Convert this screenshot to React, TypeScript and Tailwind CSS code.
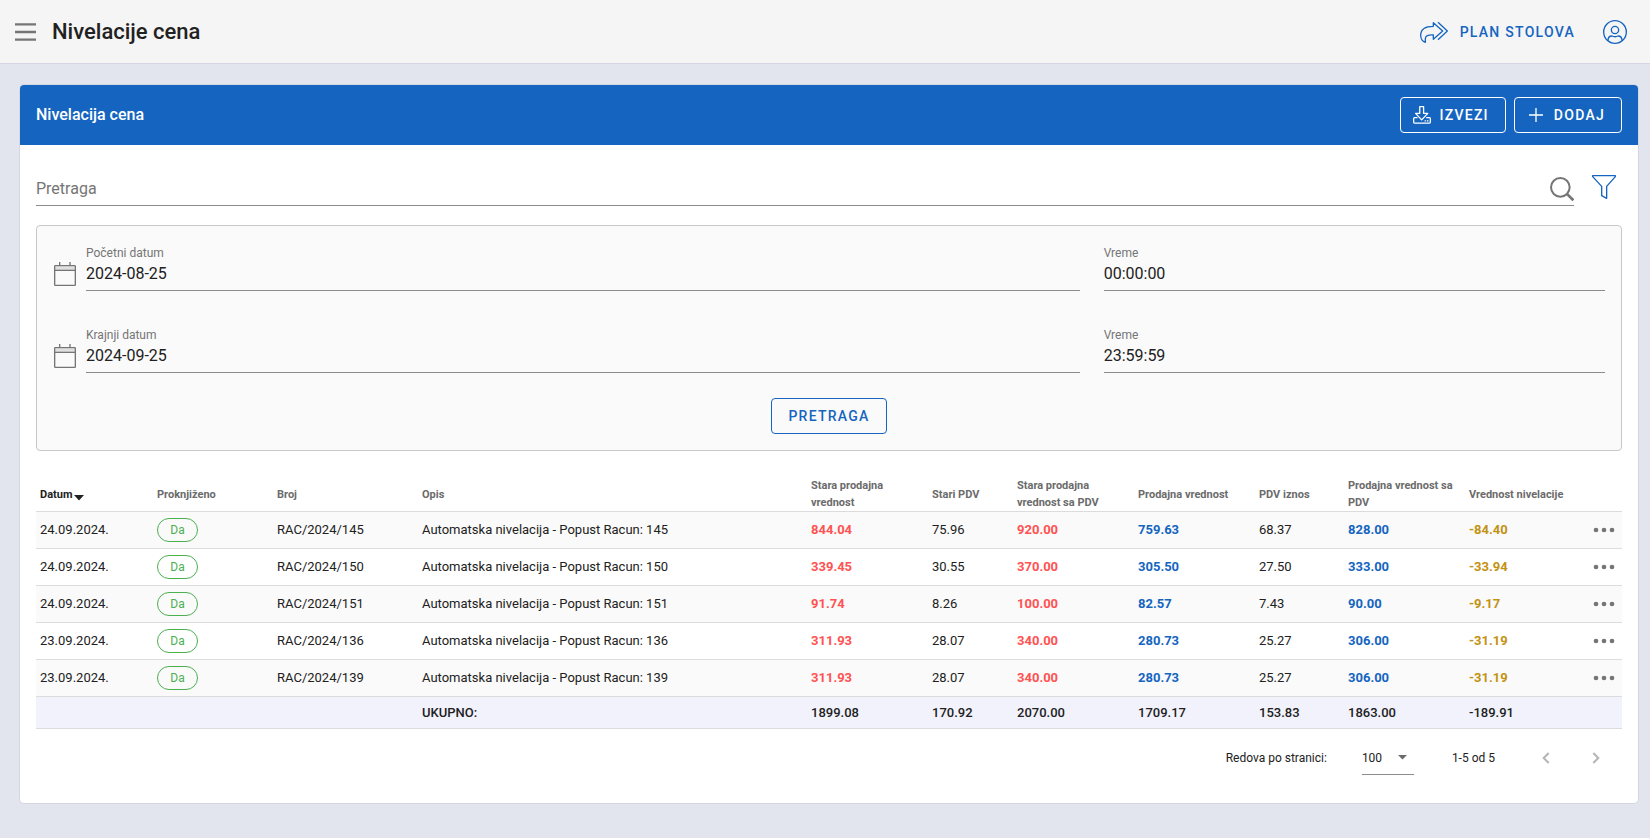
import type { ReactNode } from "react";

type IconProps = { className?: string };

function MenuIcon({ className }: IconProps) {
  return (
    <svg className={className} viewBox="0 0 63 54" fill="none" stroke="currentColor" strokeWidth="7" aria-hidden="true">
      <path d="M0 4H63M0 27H63M0 50H63" />
    </svg>
  );
}

function ForwardIcon({ className }: IconProps) {
  return (
    <svg className={className} viewBox="147 61 84 66" fill="none" stroke="currentColor" strokeWidth="4" strokeLinejoin="round" aria-hidden="true">
      <path d="M187 66 L215 91 L187 116 V103 C171 102 163 106 163 114 V125 C155 123 149 114 149 104 C149 87 162 77 187 77 Z" />
      <path d="M201 65 L229 91 L201 117" />
    </svg>
  );
}

function AccountIcon({ className }: IconProps) {
  return (
    <svg className={className} viewBox="699 59 72 72" fill="none" stroke="currentColor" strokeWidth="4" aria-hidden="true">
      <circle cx="735" cy="95" r="34" />
      <circle cx="735" cy="89" r="11" />
      <path d="M714 121 C714 111 718 107 726 107 C732 110 738 110 744 107 C752 107 756 111 756 121" />
    </svg>
  );
}

function ExportIcon({ className }: IconProps) {
  return (
    <svg className={className} viewBox="126 318 56 56" fill="none" stroke="currentColor" strokeWidth="4" strokeLinejoin="round" aria-hidden="true">
      <path d="M147 320 H159 V341 H172 L153 361 L134 341 H147 Z" />
      <path d="M140 354 H131 Q128 354 128 357 V368 Q128 371 131 371 H177 Q180 371 180 368 V357 Q180 354 177 354 H167" />
      <path d="M162 364 H166 M169 364 H174" />
    </svg>
  );
}

function PlusIcon({ className }: IconProps) {
  return (
    <svg className={className} viewBox="0 0 54 54" fill="none" stroke="currentColor" strokeWidth="4" aria-hidden="true">
      <path d="M27 6V48M6 27H48" />
    </svg>
  );
}

function SearchIcon({ className }: IconProps) {
  return (
    <svg className={className} viewBox="539 530 72 72" fill="none" stroke="currentColor" strokeWidth="6" aria-hidden="true">
      <circle cx="570" cy="561" r="28" />
      <path d="M589 580 L609 600" strokeWidth="8" />
    </svg>
  );
}

function FilterIcon({ className }: IconProps) {
  return (
    <svg className={className} viewBox="666 525 72 72" fill="none" stroke="currentColor" strokeWidth="4" strokeLinejoin="round" aria-hidden="true">
      <path d="M668 527 H736 V530 L710 559 V595 L695 587 V559 L668 530 Z" />
    </svg>
  );
}

function CalendarIcon({ className }: IconProps) {
  return (
    <svg className={className} viewBox="0 0 66 72" fill="none" stroke="currentColor" strokeWidth="4" aria-hidden="true">
      <path d="M4 13 H62 V23 H4 Z" fill="currentColor" fillOpacity="0.2" stroke="none" />
      <rect x="2" y="11" width="62" height="59" rx="2" />
      <path d="M3 25 H63" />
      <path d="M17 0 V10 M48 0 V10" />
    </svg>
  );
}

function MoreIcon({ className }: IconProps) {
  return (
    <svg className={className} viewBox="0 0 66 18" fill="currentColor" aria-hidden="true">
      <circle cx="9" cy="9" r="7" />
      <circle cx="33" cy="9" r="7" />
      <circle cx="57" cy="9" r="7" />
    </svg>
  );
}

type FieldProps = { id: string; label: string; value: string };

function Field({ id, label, value }: FieldProps) {
  return (
    <div className="flex min-w-0 flex-1 flex-col border-b border-[#8c8c8c] pb-1">
      <label htmlFor={id} className="text-xs leading-4 text-[#757575]">
        {label}
      </label>
      <input
        id={id}
        type="text"
        defaultValue={value}
        className="h-[25px] w-full bg-transparent text-base text-[#212121] outline-none"
      />
    </div>
  );
}

type RangeRowProps = { id: string; dateLabel: string; date: string; time: string };

function RangeRow({ id, dateLabel, date, time }: RangeRowProps) {
  return (
    <div className="-mx-3 flex">
      <div className="flex w-2/3 items-end gap-[9px] px-3">
        <button type="button" aria-label={dateLabel} className="mb-[5px] flex h-6 w-6 shrink-0 items-center justify-center text-[#757575]">
          <CalendarIcon className="h-6 w-[22px]" />
        </button>
        <Field id={`${id}-date`} label={dateLabel} value={date} />
      </div>
      <div className="flex w-1/3 px-3">
        <Field id={`${id}-time`} label="Vreme" value={time} />
      </div>
    </div>
  );
}

const rows = [
  ["24.09.2024.", "RAC/2024/145", "Automatska nivelacija - Popust Racun: 145", "844.04", "75.96", "920.00", "759.63", "68.37", "828.00", "-84.40"],
  ["24.09.2024.", "RAC/2024/150", "Automatska nivelacija - Popust Racun: 150", "339.45", "30.55", "370.00", "305.50", "27.50", "333.00", "-33.94"],
  ["24.09.2024.", "RAC/2024/151", "Automatska nivelacija - Popust Racun: 151", "91.74", "8.26", "100.00", "82.57", "7.43", "90.00", "-9.17"],
  ["23.09.2024.", "RAC/2024/136", "Automatska nivelacija - Popust Racun: 136", "311.93", "28.07", "340.00", "280.73", "25.27", "306.00", "-31.19"],
  ["23.09.2024.", "RAC/2024/139", "Automatska nivelacija - Popust Racun: 139", "311.93", "28.07", "340.00", "280.73", "25.27", "306.00", "-31.19"],
];

const totals = ["1899.08", "170.92", "2070.00", "1709.17", "153.83", "1863.00", "-189.91"];

const headings = [
  "Proknjiženo",
  "Broj",
  "Opis",
  "Stara prodajna vrednost",
  "Stari PDV",
  "Stara prodajna vrednost sa PDV",
  "Prodajna vrednost",
  "PDV iznos",
  "Prodajna vrednost sa PDV",
  "Vrednost nivelacije",
];

const amountStyles = [
  "font-bold text-[#ff5252]",
  "",
  "font-bold text-[#ff5252]",
  "font-bold text-[#1565c0]",
  "",
  "font-bold text-[#1565c0]",
  "font-bold text-[#c29212]",
];

function Cell({ className = "", children }: { className?: string; children?: ReactNode }) {
  return <td className={`px-1 py-0 ${className}`}>{children}</td>;
}

function PriceTable() {
  return (
    <table className="w-full table-fixed border-collapse text-left text-[13px] text-[#212121]">
      <colgroup>
        <col className="w-[117px]" />
        <col className="w-[120px]" />
        <col className="w-[145px]" />
        <col />
        <col className="w-[121px]" />
        <col className="w-[85px]" />
        <col className="w-[121px]" />
        <col className="w-[121px]" />
        <col className="w-[89px]" />
        <col className="w-[121px]" />
        <col className="w-[121px]" />
        <col className="w-9" />
      </colgroup>
      <thead>
        <tr className="h-[34px] border-b border-[#dcdcdc] text-[11px] leading-[17px] text-[#6b6b6b]">
          <th scope="col" className="px-1 py-0 font-bold text-[#212121]">
            <button type="button" className="flex items-center gap-0.5">
              Datum
              <svg className="mt-2 h-[6px] w-[10px]" viewBox="0 0 10 6" fill="currentColor" aria-hidden="true">
                <path d="M0 0H10L5 5.500Z" />
              </svg>
            </button>
          </th>
          {headings.map((h) => (
            <th key={h} scope="col" className="px-1 py-0 font-bold">
              {h}
            </th>
          ))}
          <td />
        </tr>
      </thead>
      <tbody>
        {rows.map(([date, number, description, ...amounts]) => (
          <tr key={number} className="h-[37px] border-b border-[#dcdcdc] odd:bg-[#fafafa]">
            <Cell>{date}</Cell>
            <Cell>
              <span className="flex h-6 w-[41px] items-center justify-center rounded-full border border-[#4caf50] text-xs text-[#4caf50]">
                Da
              </span>
            </Cell>
            <Cell>{number}</Cell>
            <Cell>{description}</Cell>
            {amounts.map((a, i) => (
              <Cell key={i} className={amountStyles[i]}>
                {a}
              </Cell>
            ))}
            <Cell>
              <button type="button" aria-label="Opcije" className="flex h-6 w-7 items-center justify-center text-[#757575]">
                <MoreIcon className="h-[6px] w-[22px]" />
              </button>
            </Cell>
          </tr>
        ))}
      </tbody>
      <tfoot>
        <tr className="h-8 border-b border-[#dcdcdc] bg-[#f2f2fc] font-medium">
          <Cell />
          <Cell />
          <Cell />
          <Cell>UKUPNO:</Cell>
          {totals.map((t) => (
            <Cell key={t}>{t}</Cell>
          ))}
          <Cell />
        </tr>
      </tfoot>
    </table>
  );
}

function Pagination() {
  return (
    <div className="flex items-center justify-end pt-3 pr-3.5 text-xs text-[#212121]">
      <label htmlFor="page-size" className="mr-[35px]">
        Redova po stranici:
      </label>
      <div className="mr-[38px] grid h-[34px] w-[52px] items-center border-b border-[#8c8c8c]">
        <select id="page-size" className="col-start-1 row-start-1 w-full appearance-none bg-transparent outline-none" defaultValue="100">
          <option>10</option>
          <option>50</option>
          <option>100</option>
        </select>
        <svg className="pointer-events-none col-start-1 row-start-1 mr-[7px] h-[5px] w-[9px] justify-self-end text-[#6b6b6b]" viewBox="0 0 9 5" fill="currentColor" aria-hidden="true">
          <path d="M0 0H9L4.500 4.500Z" />
        </svg>
      </div>
      <span className="mr-[39px]">1-5 od 5</span>
      <button type="button" disabled aria-label="Prethodna" className="mr-[26px] flex h-6 w-6 items-center justify-center text-[#b5b5b5]">
        <svg className="h-3 w-2" viewBox="0 0 8 12" fill="none" stroke="currentColor" strokeWidth="2" aria-hidden="true">
          <path d="M6.700 1L1.700 6L6.700 11" />
        </svg>
      </button>
      <button type="button" disabled aria-label="Sledeća" className="flex h-6 w-6 items-center justify-center text-[#b5b5b5]">
        <svg className="h-3 w-2" viewBox="0 0 8 12" fill="none" stroke="currentColor" strokeWidth="2" aria-hidden="true">
          <path d="M1.300 1L6.300 6L1.300 11" />
        </svg>
      </button>
    </div>
  );
}

export default function App() {
  return (
    <div className="min-h-screen bg-[#e2e5ed] font-['Roboto',sans-serif] text-[#212121]">
      <header className="flex h-16 items-center justify-between border-b border-[#d5d6e3] bg-[#f5f5f5] pr-[23px] pl-[15px]">
        <div className="flex items-center gap-4">
          <button type="button" aria-label="Meni" className="text-[#757575]">
            <MenuIcon className="h-[18px] w-[21px]" />
          </button>
          <h1 className="text-[22px] leading-8 font-medium">Nivelacije cena</h1>
        </div>
        <div className="flex items-center gap-7 text-[#1565c0]">
          <a href="#plan" className="flex items-center gap-3 text-sm font-medium tracking-[0.09em]">
            <ForwardIcon className="h-[22px] w-7" />
            PLAN STOLOVA
          </a>
          <button type="button" aria-label="Nalog">
            <AccountIcon className="h-6 w-6" />
          </button>
        </div>
      </header>

      <main className="pt-5 pr-[11px] pb-8 pl-[19px]">
        <section className="overflow-hidden rounded-[5px] border border-[#d5d6e3] bg-white">
          <div className="flex h-[60px] items-center justify-between bg-[#1565c0] px-4 text-white">
            <h2 className="text-base font-medium">Nivelacija cena</h2>
            <div className="flex gap-2">
              <button type="button" className="flex h-9 items-center gap-[9px] rounded border border-white pr-4 pl-3 text-sm font-medium tracking-[0.09em]">
                <ExportIcon className="h-[18px] w-[18px]" />
                IZVEZI
              </button>
              <button type="button" className="flex h-9 items-center gap-[9px] rounded border border-white pr-4 pl-3 text-sm font-medium tracking-[0.09em]">
                <PlusIcon className="h-[18px] w-[18px]" />
                DODAJ
              </button>
            </div>
          </div>

          <div className="px-4 pt-6 pb-7">
            <div className="mb-[19px] flex items-center gap-[18px]">
              <div className="flex h-[37px] flex-1 items-center border-b border-[#8c8c8c] pt-[3px]">
                <input
                  type="search"
                  aria-label="Pretraga"
                  placeholder="Pretraga"
                  className="min-w-0 flex-1 bg-transparent text-base outline-none placeholder:text-[#757575]"
                />
                <button type="button" aria-label="Traži" className="text-[#757575]">
                  <SearchIcon className="h-6 w-6" />
                </button>
              </div>
              <button type="button" aria-label="Filter" className="mr-[6px] mb-0.5 text-[#1565c0]">
                <FilterIcon className="h-6 w-6" />
              </button>
            </div>

            <form className="mb-[26px] rounded border border-[#c8c8c8] bg-[#fafafa] px-4 pt-[19px] pb-4">
              <div className="flex flex-col gap-9">
                <RangeRow id="start" dateLabel="Početni datum" date="2024-08-25" time="00:00:00" />
                <RangeRow id="end" dateLabel="Krajnji datum" date="2024-09-25" time="23:59:59" />
              </div>
              <div className="mt-[25px] flex justify-center">
                <button type="button" className="h-9 rounded border border-[#1565c0] px-4 text-sm font-medium tracking-[0.09em] text-[#1565c0]">
                  PRETRAGA
                </button>
              </div>
            </form>

            <PriceTable />
            <Pagination />
          </div>
        </section>
      </main>
    </div>
  );
}
